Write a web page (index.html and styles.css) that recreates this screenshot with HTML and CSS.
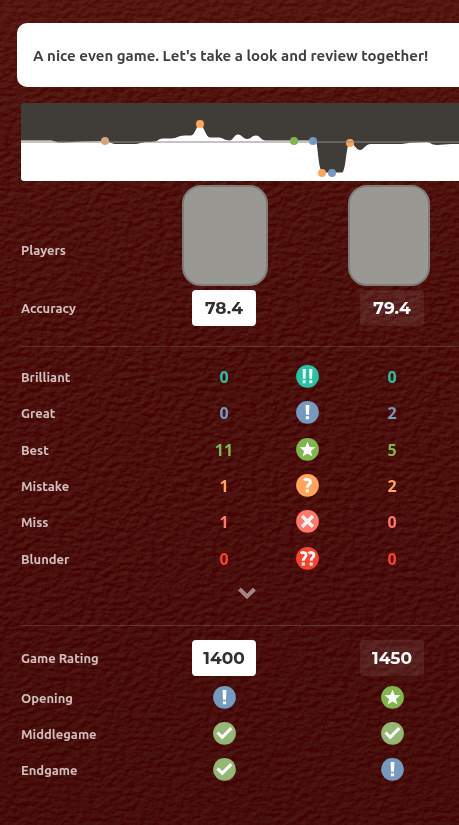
FILE: index.html
```html
<!DOCTYPE html>
<html lang="en">
<head>
<meta charset="utf-8">
<meta name="viewport" content="width=device-width, initial-scale=1">
<title>Game Review</title>
<link rel="stylesheet" href="styles.css">
</head>
<body>
<svg class="leather" aria-hidden="true">
  <defs>
    <filter id="grain" x="0" y="0" width="100%" height="100%" color-interpolation-filters="sRGB">
      <feTurbulence type="fractalNoise" baseFrequency="0.13 0.2" numOctaves="4" seed="11"/>
      <feDiffuseLighting surfaceScale="1.4" diffuseConstant="1" lighting-color="#ffffff">
        <feDistantLight azimuth="235" elevation="50"/>
      </feDiffuseLighting>
      <feColorMatrix values="0.12 0 0 0 0.21  0.34 0 0 0 -0.195  0.25 0 0 0 -0.14  0 0 0 0 1"/>
    </filter>
    <linearGradient id="shade" x1="0" y1="0" x2="0" y2="1">
      <stop offset="0" stop-color="#6b2a1c" stop-opacity=".22"/>
      <stop offset=".45" stop-color="#400808" stop-opacity=".1"/>
      <stop offset="1" stop-color="#350606" stop-opacity=".3"/>
    </linearGradient>
  </defs>
  <rect width="100%" height="100%" filter="url(#grain)"/>
  <rect width="100%" height="100%" fill="url(#shade)"/>
</svg>
<svg class="sprite" aria-hidden="true">
  <symbol id="brilliant" viewBox="0 0 18 19">
    <circle cx="9" cy="9" r="9" fill="#26c2a3"/>
    <path fill="#fff" d="M5.1 3.2h2.6l-.3 7.6H5.4zM5.2 12.1h2.3v2.4H5.2zM10.3 3.2h2.6l-.3 7.6h-2zM10.5 12.1h2.3v2.4h-2.3z"/>
  </symbol>
  <symbol id="great" viewBox="0 0 18 19">
    <circle cx="9" cy="9" r="9" fill="#749bbf"/>
    <path fill="#fff" d="M7.5 3.2h3l-.3 7.6H7.8zM7.7 12.1h2.6v2.4H7.7z"/>
  </symbol>
  <symbol id="best" viewBox="0 0 18 19">
    <circle cx="9" cy="9" r="9" fill="#81b64c"/>
    <path fill="#fff" d="M9 2.9l1.7 4.2 4.5.3-3.5 2.9 1.2 4.4L9 12.2l-3.9 2.5 1.2-4.4-3.5-2.9 4.5-.3z"/>
  </symbol>
  <symbol id="mistake" viewBox="0 0 18 19">
    <circle cx="9" cy="9" r="9" fill="#ffa459"/>
    <path fill="none" stroke="#fff" stroke-width="2.4" d="M6.4 5.1C7.5 3.9 11.3 3.7 11.3 6.4 11.3 8.5 8.8 8.2 8.8 10.9"/>
    <path fill="#fff" d="M7.6 12.2h2.5v2.4H7.6z"/>
  </symbol>
  <symbol id="miss" viewBox="0 0 18 19">
    <circle cx="9" cy="9" r="9" fill="#ff7769"/>
    <path stroke="#f1f2f2" stroke-width="2.8" d="M4.7 4.7l8.6 8.6M13.3 4.7l-8.6 8.6"/>
  </symbol>
  <symbol id="blunder" viewBox="0 0 18 19">
    <circle cx="9" cy="9" r="9" fill="#fa412d"/>
    <path fill="none" stroke="#fff" stroke-width="2.3" d="M3.7 5.2C4.8 4 7.9 3.9 7.9 6.4 7.9 8.5 5.7 8.2 5.7 10.9M9.9 5.2C11 4 14.1 3.9 14.1 6.4 14.1 8.5 11.9 8.2 11.9 10.9"/>
    <path fill="#fff" d="M4.5 12.2h2.4v2.4H4.5zM10.7 12.2h2.4v2.4h-2.4z"/>
  </symbol>
  <symbol id="good" viewBox="0 0 18 19">
    <circle cx="9" cy="9" r="9" fill="#95b776"/>
    <path fill="none" stroke="#fff" stroke-width="2.5" d="M3.5 8.3l3.7 3.8 7.2-7.2"/>
  </symbol>
</svg>

<main class="review">
  <p class="message">A nice even game. Let's take a look and review together!</p>

  <svg class="graph" viewBox="0 0 452 78" role="img" aria-label="Evaluation graph">
    <rect width="452" height="78" fill="#403d38"/>
    <path fill="#fff" d="M0 37.5H29C33 37.5 34 39.5 40 39.5 50 39.5 56 38.5 64 38.5L86 38C90 39 90 41 96 41H112C120 41 120 39 128 39 139 39 136 35.5 143 35.5H150C157 35.5 156 32.5 164 32.5H170C174 32.5 176 21 179 21S185 34.5 189 34.5H198C202 34.5 203 37.5 209 37.5 212 37.5 213 31.5 217 31.5S222 36 226 36 231 32.5 235 32.5 240 37.5 245 37.5H294.5C297 38 297 69.5 302 69.5H321C325 69.5 325 40 329 40 333 40 335 47 339 47S344 41 350 41H378C386 41 386 39.5 394 39.5L406 39C410 39 409 42 416 42L430 41H452V78H0Z"/>
    <rect y="38" width="452" height="2" fill="#8b8987" fill-opacity=".5"/>
    <circle cx="84" cy="38" r="4" fill="#d5a47d"/>
    <circle cx="179" cy="21" r="4" fill="#ffa459"/>
    <circle cx="273" cy="38" r="4" fill="#81b64c"/>
    <circle cx="292" cy="38" r="4" fill="#749bbf"/>
    <circle cx="301" cy="70" r="4" fill="#ffa459"/>
    <circle cx="311" cy="70" r="4" fill="#749bbf"/>
    <circle cx="329" cy="40" r="4" fill="#ffa459"/>
    <path stroke="#8b8987" stroke-opacity=".5" stroke-width="2" d="M325 39h8"/>
  </svg>

  <table class="stats summary">
    <colgroup><col class="name"><col class="white"><col class="mark"><col class="black"><col></colgroup>
    <tr class="players"><th scope="row">Players</th><td><div class="avatar"></div></td><td></td><td><div class="avatar narrow"></div></td><td></td></tr>
    <tr><th scope="row">Accuracy</th><td><span class="badge light">78.4</span></td><td></td><td><span class="badge">79.4</span></td><td></td></tr>
  </table>

  <section class="moves">
    <table class="stats">
      <colgroup><col class="name"><col class="white"><col class="mark"><col class="black"><col></colgroup>
      <tr class="brilliant"><th scope="row">Brilliant</th><td>0</td><td><svg class="icon"><use href="#brilliant"/></svg></td><td>0</td><td></td></tr>
      <tr class="great"><th scope="row">Great</th><td>0</td><td><svg class="icon"><use href="#great"/></svg></td><td>2</td><td></td></tr>
      <tr class="best"><th scope="row">Best</th><td>11</td><td><svg class="icon"><use href="#best"/></svg></td><td>5</td><td></td></tr>
      <tr class="mistake"><th scope="row">Mistake</th><td>1</td><td><svg class="icon"><use href="#mistake"/></svg></td><td>2</td><td></td></tr>
      <tr class="miss"><th scope="row">Miss</th><td>1</td><td><svg class="icon"><use href="#miss"/></svg></td><td>0</td><td></td></tr>
      <tr class="blunder"><th scope="row">Blunder</th><td>0</td><td><svg class="icon"><use href="#blunder"/></svg></td><td>0</td><td></td></tr>
    </table>
    <button class="expand" type="button" aria-label="Show more">
      <svg width="20" height="14" viewBox="0 0 20 14"><path fill="none" stroke="#a58583" stroke-width="4" d="M2.5 2l7.5 7.5L17.5 2"/></svg>
    </button>
  </section>

  <section class="phases">
    <table class="stats">
      <colgroup><col class="name"><col class="white"><col class="mark"><col class="black"><col></colgroup>
      <tr class="rating"><th scope="row">Game Rating</th><td><span class="badge light">1400</span></td><td></td><td><span class="badge">1450</span></td><td></td></tr>
      <tr><th scope="row">Opening</th><td><svg class="icon"><use href="#great"/></svg></td><td></td><td><svg class="icon"><use href="#best"/></svg></td><td></td></tr>
      <tr><th scope="row">Middlegame</th><td><svg class="icon"><use href="#good"/></svg></td><td></td><td><svg class="icon"><use href="#good"/></svg></td><td></td></tr>
      <tr><th scope="row">Endgame</th><td><svg class="icon"><use href="#good"/></svg></td><td></td><td><svg class="icon"><use href="#great"/></svg></td><td></td></tr>
    </table>
  </section>
</main>
</body>
</html>
```
FILE: styles.css
```css
* {
  box-sizing: border-box;
}

body {
  margin: 0;
  min-height: 100vh;
  overflow-x: hidden;
  background: #490d0b;
  color: #fff;
  font-family: Ubuntu, "Noto Sans", sans-serif;
}

.leather {
  position: fixed;
  inset: 0;
  width: 100%;
  height: 100%;
  z-index: -1;
}

.sprite {
  display: none;
}

/* The panel runs past the right edge of the window. */
.review {
  margin-right: -14px;
  padding: 23px 0 24px 21px;
}

.message {
  display: flex;
  align-items: center;
  height: 64px;
  margin: 0 0 16px -4px;
  padding: 0 16px;
  border-radius: 10px;
  background: #fff;
  color: #403d3a;
  font-size: 15px;
  font-weight: 600;
  white-space: nowrap;
}

.graph {
  display: block;
  width: 100%;
  border-radius: 3px;
}

.stats {
  width: 100%;
  table-layout: fixed;
  border-collapse: collapse;
}

.name {
  width: 161px;
}

.white {
  width: 84px;
}

.mark {
  width: 82px;
}

.black {
  width: 88px;
}

.stats tr {
  height: 36px;
}

.stats th,
.stats td {
  padding: 0;
  line-height: 20px;
}

.stats th {
  color: #d3c0bf;
  font-size: 13px;
  font-weight: 700;
  text-align: left;
}

.stats td {
  font-family: "Open Sans", "Noto Sans", sans-serif;
  font-size: 16px;
  font-weight: 700;
  text-align: center;
}

.stats .players {
  height: 109px;
}

.players th {
  padding-top: 28px;
}

.avatar {
  width: 86px;
  height: 101px;
  border: 2px solid #7f7c7a;
  border-radius: 19px;
  background: #9a9893;
}

.avatar.narrow {
  width: 82px;
}

.summary {
  margin-bottom: 20px;
}

.badge {
  display: block;
  width: 64px;
  margin: 0 auto;
  border-radius: 4px;
  background: rgba(255, 255, 255, 0.08);
  font-family: Montserrat, Inter, sans-serif;
  font-size: 17px;
  font-weight: 700;
  line-height: 36px;
}

.badge.light {
  background: #fff;
  color: #312e2b;
}

.icon {
  display: block;
  width: 23px;
  height: 24px;
  margin: 0 auto;
}

.moves,
.phases {
  border-top: 1px solid rgba(255, 255, 255, 0.15);
}

.moves {
  padding: 12px 0 15px;
}

.moves .stats {
  height: 218px;
}

.phases {
  padding-top: 10px;
}

.stats .rating {
  height: 44px;
}

.brilliant { color: #26c2a3; }
.great { color: #749bbf; }
.best { color: #81b64c; }
.mistake { color: #ffa459; }
.miss { color: #ff7769; }
.blunder { color: #fa412d; }

.expand {
  display: flex;
  align-items: center;
  justify-content: center;
  width: 100%;
  height: 33px;
  padding: 0;
  border: 0;
  background: none;
  cursor: pointer;
}
```
